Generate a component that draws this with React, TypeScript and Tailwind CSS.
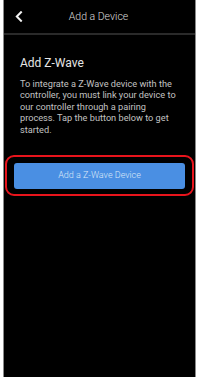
import React from "react";

export default function App() {
  return (
    <div className="w-[200px] h-[377px] bg-white flex" style={{ fontFamily: "Roboto, 'Noto Sans', sans-serif" }}>
      <div className="ml-[3px] w-[193px] h-full bg-black border-x border-[#8a8a8a] flex flex-col">
        <div className="h-[35px] flex items-center relative border-b-2 border-[#2a2a2a]">
          <svg className="absolute left-[10px] top-[11px]" width="10" height="11" viewBox="0 0 10 11" fill="none">
            <path d="M7 1.2L2.8 5.5L7 9.8" stroke="#f2f2f2" strokeWidth="2" strokeLinecap="square" />
          </svg>
          <div className="w-full text-center text-[10.5px] font-light text-[#dcdcdc] pr-[2px]">Add a Device</div>
        </div>
        <div className="px-[16px] pt-[21px]">
          <div className="text-[12px] leading-[14px] text-[#e6e6e6]">Add Z-Wave</div>
          <p className="mt-[8px] text-[9.2px] leading-[11.4px] text-[#c2c2c2]">
            To integrate a Z-Wave device with the controller, you must link your device to our controller through a pairing process. Tap the button below to get started.
          </p>
        </div>
        <div className="mt-[20px] mx-[1px] h-[41px] border-2 border-[#e8141c] rounded-[9px] flex items-center px-[7px]">
          <div className="w-full h-[26px] rounded-[3px] bg-[#4a8fe3] flex items-center justify-center text-[9px] font-light text-[#dbe8f8]">
            Add a Z-Wave Device
          </div>
        </div>
      </div>
    </div>
  );
}
